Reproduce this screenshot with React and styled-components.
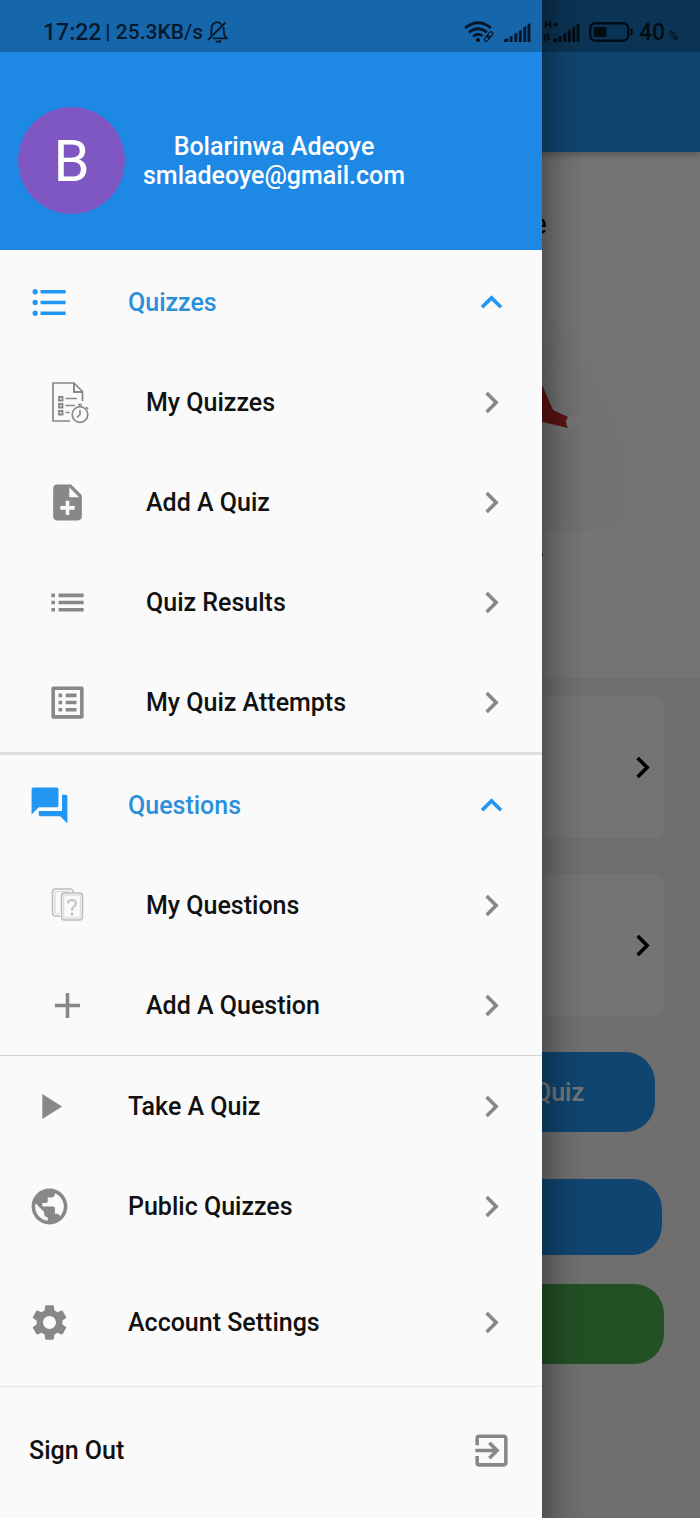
import React, { useState } from "react"
import styled, { createGlobalStyle } from "styled-components"
import {
  MdFormatListBulleted,
  MdNoteAdd,
  MdList,
  MdListAlt,
  MdForum,
  MdAdd,
  MdPlayArrow,
  MdPublic,
  MdSettings,
  MdExitToApp,
  MdChevronRight,
  MdExpandLess,
  MdExpandMore,
} from "react-icons/md"

const quizLinks = [
  { label: "My Quizzes", icon: <QuizSheetIcon /> },
  { label: "Add A Quiz", icon: <MdNoteAdd /> },
  { label: "Quiz Results", icon: <MdList /> },
  { label: "My Quiz Attempts", icon: <MdListAlt /> },
]

const questionLinks = [
  { label: "My Questions", icon: <QuestionCardsIcon /> },
  { label: "Add A Question", icon: <MdAdd /> },
]

const App = () => {
  return (
    <>
      <GlobalStyle />
      <Screen>
        <Home />
        <Scrim />
        <Drawer>
          <Profile>
            <Avatar>B</Avatar>
            <UserInfo>
              <span>Bolarinwa Adeoye</span>
              <span>smladeoye@gmail.com</span>
            </UserInfo>
          </Profile>

          <Nav>
            <Group title="Quizzes" icon={<MdFormatListBulleted />} links={quizLinks} />
            <Divider $size={3} $color="#dedede" />
            <Group title="Questions" icon={<MdForum />} links={questionLinks} />
            <Divider $size={1} $color="#d4d4d4" />
            <NavLink label="Take A Quiz" icon={<MdPlayArrow />} />
            <NavLink label="Public Quizzes" icon={<MdPublic />} />
            <Settings>
              <NavLink label="Account Settings" icon={<MdSettings />} />
            </Settings>
            <Divider $size={1} $color="#e6e6e6" />
            <SignOut type="button">
              Sign Out
              <IconBox>
                <MdExitToApp />
              </IconBox>
            </SignOut>
          </Nav>
        </Drawer>
        <StatusBar />
      </Screen>
    </>
  )
}

export default App

const Group = ({ title, icon, links }) => {
  const [open, setOpen] = useState(true)

  return (
    <div>
      <GroupButton type="button" aria-expanded={open} onClick={() => setOpen(!open)}>
        <IconBox>{icon}</IconBox>
        <Label>{title}</Label>
        <IconBox>{open ? <MdExpandLess /> : <MdExpandMore />}</IconBox>
      </GroupButton>
      {open && links.map((link) => <NavLink key={link.label} nested {...link} />)}
    </div>
  )
}

const NavLink = ({ label, icon, nested }) => (
  <RowLink href="#" $nested={nested}>
    <IconBox>{icon}</IconBox>
    <Label>{label}</Label>
    <IconBox>
      <MdChevronRight />
    </IconBox>
  </RowLink>
)

// page under the drawer
const Home = () => (
  <HomePage inert>
    <AppBar />
    <Hero>
      <Greeting>e</Greeting>
      <Illustration viewBox="450 280 200 280">
        <defs>
          <radialGradient id="glow" cx="450" cy="480" r="195" gradientUnits="userSpaceOnUse">
            <stop offset="0" stopColor="#eeeeee" />
            <stop offset="0.6" stopColor="#f5f5f5" />
            <stop offset="1" stopColor="#fcfcfc" />
          </radialGradient>
        </defs>
        <path d="M450 280 H650 V531 H450 Z" fill="url(#glow)" />
        <path d="M566 417 L580 418 L582 424 L567 427 Z" fill="#ffffff" />
        <path d="M520 360 L543 387 L553 410 L568 417 Q564 422 568 428 L543 422 L520 416 Z" fill="#c62828" />
        <path d="M530 553 h13 v3 h-13z" fill="#555555" />
      </Illustration>
    </Hero>
    <HomeBody>
      <HomeCard>
        <MdChevronRight />
      </HomeCard>
      <HomeCard>
        <MdChevronRight />
      </HomeCard>
      <PillButton type="button" $inset={45} $height={80}>
        Quiz
      </PillButton>
      <PillButton type="button" $inset={38} $height={76} $top={47} />
      <PillButton type="button" $inset={36} $height={80} $top={29} $color="#4caf50" />
    </HomeBody>
  </HomePage>
)

const StatusBar = () => (
  <Status>
    <Time>17:22</Time>
    <Speed>| 25.3KB/s</Speed>
    <BellOffIcon />
    <Spacer />
    <WifiIcon />
    <SignalIcon />
    <SignalIcon roaming />
    <BatteryIcon />
    <Battery>
      40 <small>%</small>
    </Battery>
  </Status>
)

function QuizSheetIcon() {
  return (
    <svg viewBox="0 0 43 43" fill="none" stroke="currentColor" strokeWidth="1.7">
      <path d="M24 40 H7 V2 H28 L36.500 10.500 V20" />
      <path d="M28 2 V11 H36.500" strokeWidth="2" />
      <path d="M13 16 h3.500 v3.500 h-3.500z M13 23 h3.500 v3.500 h-3.500z M13 30 h3.500 v3.500 h-3.500z" strokeWidth="1.800" />
      <path d="M19.500 17.500 H31 M19.500 24.500 H29 M19.500 31.500 H23.500" />
      <circle cx="34" cy="33.500" r="7.800" />
      <path d="M34 29 V33.500 L31 36.500 M34 25.500 V23 M32 23.500 H36 M40 26 L42 28" />
    </svg>
  )
}

function QuestionCardsIcon() {
  return (
    <svg viewBox="0 0 43 43" fill="none" stroke="#bdbdbd" strokeWidth="1.500">
      <path d="M14 32 H9.500 Q6.500 32 6.500 29 V8 Q6.500 5 9.500 5 H24 Q27 5 27.500 8" />
      <path d="M13 29.500 H10 Q9 29.500 9 28 V9 Q9 7.500 10.500 7.500 H24" stroke="#dedede" />
      <rect x="15.500" y="9" width="21" height="27" rx="3" fill="#fafafa" />
      <rect x="17.500" y="11" width="17" height="23" rx="1" stroke="#dedede" />
      <path d="M22 19.500 Q22 16 26 16 Q30 16 30 19.500 Q30 21.500 27.500 23 Q26 24 26 27" strokeWidth="2.500" stroke="#cccccc" />
      <circle cx="26" cy="30" r="0.800" />
    </svg>
  )
}

const BellOffIcon = () => (
  <svg width="21" height="22" viewBox="0 0 21 22" fill="none" stroke="currentColor" strokeWidth="1.800">
    <path d="M14.500 3.500 Q12.500 1.200 10 1.200 Q4.500 1.800 4.500 8 Q4.500 11.500 3.800 14" />
    <path d="M16.500 6 Q17 13 17.500 14.500 L19.500 17.300 H6" />
    <path d="M1 19 L18.500 1.500" />
    <path d="M9 20 Q11 21.500 14 20" strokeWidth="2" />
  </svg>
)

const WifiIcon = () => (
  <svg width="31" height="22" viewBox="0 0 31 22" fill="none" stroke="currentColor" strokeWidth="2.800">
    <path d="M1 7 Q14 -3.500 27 7" />
    <path d="M5 11.500 Q14 4 23 11.500" />
    <path d="M9 15.500 Q14 11.500 18.500 15" />
    <circle cx="14" cy="19" r="1.600" fill="currentColor" strokeWidth="1" />
    <g strokeWidth="1.300">
      <rect x="19.500" y="15.500" width="6.500" height="3.600" rx="1.800" transform="rotate(-50 23 17)" />
      <rect x="23" y="12" width="6.500" height="3.600" rx="1.800" transform="rotate(-50 26 14)" />
    </g>
  </svg>
)

const SignalIcon = ({ roaming }) => (
  <svg width={roaming ? 40 : 27} height="22" viewBox={roaming ? "-13 0 40 22" : "0 0 27 22"} fill="currentColor">
    <path d="M0 21 V18.500 L4 17 V21z M5.500 21 V16 L8.500 14.500 V21z M10.300 21 V13 L13.300 11.500 V21z M14.800 21 V10 L17.800 8.500 V21z M19.300 21 V6.500 L22.300 5 V21z M23.500 21 V3.500 L26.500 2 V21z" />
    {roaming && (
      <path
        d="M-7 0 V7 M-2.500 0 V7 M-7 3.500 H-2.500 M0 3.500 H5 M2.500 1 V6 M-8 13 V20 M-9.500 15 L-8 13 M-5 12 V19 M-5 19 L-3.500 17"
        fill="none"
        stroke="currentColor"
        strokeWidth="1.500"
      />
    )}
  </svg>
)

const BatteryIcon = () => (
  <svg width="44" height="20" viewBox="0 0 44 20" fill="none" stroke="currentColor" strokeWidth="2.400">
    <rect x="1.200" y="1.200" width="38" height="17.500" rx="5" />
    <rect x="4.500" y="5" width="13" height="10" rx="1" fill="currentColor" stroke="none" />
    <path d="M42.500 7 V13" />
  </svg>
)

const GlobalStyle = createGlobalStyle`
  * {
    box-sizing: border-box;
  }
  body {
    margin: 0;
    font-family: Roboto, "Liberation Sans", sans-serif;
    font-size: 25px;
    font-weight: 500;
  }
  button {
    font: inherit;
    border: 0;
    cursor: pointer;
  }
`

/* every layer shares the same grid cell */
const Screen = styled.div`
  display: grid;
  grid-template-columns: 100%;
  min-height: 100vh;
  overflow: hidden;
  > * {
    grid-area: 1 / 1;
  }
`

const HomePage = styled.main`
  display: flex;
  flex-direction: column;
  background: #f1f1f1;
`

const AppBar = styled.div`
  height: 152px;
  background: #2196f3;
  box-shadow: 0 2px 8px rgba(0, 0, 0, 0.3);
  z-index: 1;
`

const Hero = styled.section`
  display: flex;
  flex-direction: column;
  align-items: flex-end;
  gap: 38px;
  padding: 54px 50px 118px;
  background: #fcfcfc;
`

const Greeting = styled.p`
  margin: 0;
  padding-right: 103px;
  font-size: 30px;
  font-weight: 400;
  line-height: 36px;
`

const Illustration = styled.svg`
  width: 200px;
  height: 280px;
`

const HomeBody = styled.section`
  display: flex;
  flex-direction: column;
  padding: 18px 0;
`

const HomeCard = styled.article`
  display: flex;
  align-items: center;
  justify-content: flex-end;
  height: 142px;
  margin: 0 36px 36px;
  border-radius: 12px;
  background: #fcfcfc;
  svg {
    width: 43px;
    height: 43px;
  }
`

const PillButton = styled.button`
  height: ${(props) => props.$height}px;
  margin: ${(props) => props.$top || 0}px ${(props) => props.$inset}px 0;
  padding: 0 71px;
  border-radius: 30px;
  background: ${(props) => props.$color || "#2196f3"};
  color: #ffffff;
  text-align: right;
`

const Scrim = styled.div`
  background: rgba(0, 0, 0, 0.54);
  z-index: 1;
`

const Drawer = styled.aside`
  position: relative;
  width: 80%;
  max-width: 542px;
  background: #fafafa;
  z-index: 2;
  /* shadow cast on the page, even from top to bottom */
  &::after {
    content: "";
    position: absolute;
    top: 0;
    bottom: 0;
    left: 100%;
    width: 44px;
    background: linear-gradient(90deg, rgba(0, 0, 0, 0.28), rgba(0, 0, 0, 0.08) 50%, transparent);
    pointer-events: none;
  }
`

const Profile = styled.header`
  display: flex;
  align-items: center;
  gap: 18px;
  padding: 107px 18px 36px;
  background: #1e88e5;
`

const Avatar = styled.div`
  display: flex;
  align-items: center;
  justify-content: center;
  flex: none;
  width: 107px;
  height: 107px;
  border-radius: 50%;
  background: #7e57c2;
  color: #ffffff;
  font-size: 58px;
  font-weight: 400;
`

const UserInfo = styled.div`
  display: flex;
  flex-direction: column;
  align-items: center;
  color: #ffffff;
  line-height: 29px;
`

const Nav = styled.nav`
  padding-top: 2px;
`

const Row = styled.div`
  display: flex;
  align-items: center;
  gap: 57px;
  width: 100%;
  height: 100px;
  padding: 0 29px 0 ${(props) => (props.$nested ? 46 : 28)}px;
  background: none;
  color: #111111;
  text-align: left;
  text-decoration: none;
`

const IconBox = styled.span`
  display: flex;
  flex: none;
  color: #888888;
  svg {
    width: 43px;
    height: 43px;
  }
`

const RowLink = styled(Row).attrs({ as: "a" })``

const GroupButton = styled(Row).attrs({ as: "button" })`
  color: #2a90db;
  ${IconBox} {
    color: #2196f3;
  }
`

const Label = styled.span`
  flex: 1;
`

const Divider = styled.hr`
  height: ${(props) => props.$size}px;
  margin: 0;
  border: 0;
  background: ${(props) => props.$color};
`

const Settings = styled.div`
  padding: 16px 0 14px;
`

const SignOut = styled.button`
  display: flex;
  align-items: center;
  justify-content: space-between;
  width: 100%;
  height: 127px;
  padding: 0 29px;
  background: none;
  color: #111111;
`

const Status = styled.div`
  display: flex;
  align-items: center;
  align-self: start;
  gap: 9px;
  height: 52px;
  padding: 12px 22px 0 43px;
  background: rgba(0, 0, 0, 0.25);
  color: rgba(0, 0, 0, 0.76);
  font-size: 23px;
  z-index: 3;
  svg {
    flex: none;
  }
`

const Time = styled.span`
  white-space: nowrap;
`

const Speed = styled.span`
  font-size: 21px;
  margin: 0 -5px;
  white-space: pre;
`

const Spacer = styled.span`
  flex: 1;
`

const Battery = styled.span`
  display: flex;
  align-items: baseline;
  gap: 4px;
  margin-left: -3px;
  small {
    font-size: 12px;
  }
`
